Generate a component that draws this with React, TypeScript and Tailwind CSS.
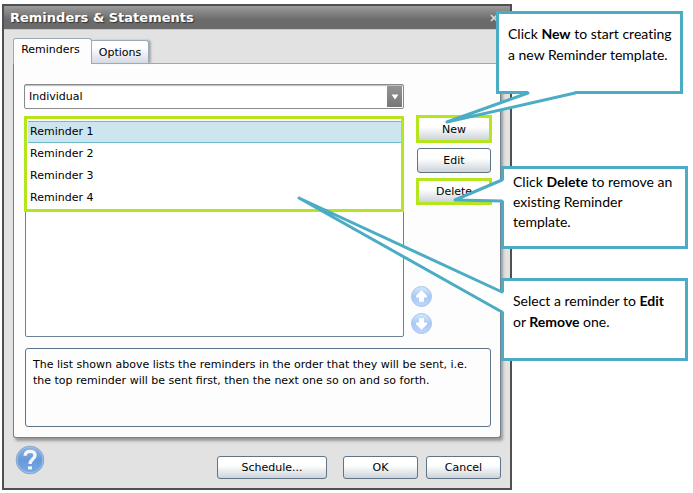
import type { ReactNode } from 'react';

const reminders = ['Reminder 1', 'Reminder 2', 'Reminder 3', 'Reminder 4'];

const buttonClass =
  'rounded-[3px] border border-[#5f7486] bg-linear-to-b from-white from-40% to-[#cdd3d9] pt-0.5 text-center text-black';

function ArrowButton({ label, down }: { label: string; down?: boolean }) {
  return (
    <button type="button" aria-label={label} className="block size-[21px]">
      <svg viewBox="0 0 21 21" className="size-full">
        <defs>
          <linearGradient id={down ? 'arrowDown' : 'arrowUp'} x1="0" y1="0" x2="0" y2="1">
            <stop offset="0" stopColor="#d3ecfb" />
            <stop offset="0.5" stopColor="#aac8f5" />
            <stop offset="1" stopColor="#bcd8fb" />
          </linearGradient>
        </defs>
        <circle cx="10.5" cy="10.5" r="10" fill={down ? 'url(#arrowDown)' : 'url(#arrowUp)'} stroke="#a9c2ea" />
        <path
          d="M10.5 4.2 L16 9.8 V11.5 H13 V15.8 H8 V11.5 H5 V9.8 Z"
          fill="#fff"
          transform={down ? 'rotate(180 10.5 10.5)' : undefined}
        />
      </svg>
    </button>
  );
}

function HelpIcon() {
  return (
    <svg viewBox="0 0 30 30" className="size-full">
      <defs>
        <linearGradient id="help" x1="0" y1="0" x2="0" y2="1">
          <stop offset="0" stopColor="#8db3e4" />
          <stop offset="0.5" stopColor="#6699d9" />
          <stop offset="1" stopColor="#79abe6" />
        </linearGradient>
      </defs>
      <circle cx="15" cy="15" r="13.8" fill="url(#help)" stroke="#8aa5c8" />
      <circle cx="15" cy="15" r="12.8" fill="none" stroke="#a5c6ef" strokeWidth="0.8" />
      <path
        d="M10.2 10.8 C10.2 7.4 12.4 6.4 15.2 6.4 C18.2 6.4 20 8 20 10.4 C20 14 15 14.2 15 19"
        fill="none"
        stroke="#f4f6f8"
        strokeWidth="3.4"
      />
      <rect x="13" y="21.4" width="4" height="3" fill="#f4f6f8" />
    </svg>
  );
}

function Callout({ className, children, tail }: { className: string; children: ReactNode; tail: ReactNode }) {
  return (
    <aside
      className={`absolute left-full border-[3px] border-[#4bacc6] bg-white font-[Lato,sans-serif] text-[14px] text-black [font-variant-ligatures:none] ${className}`}
    >
      {tail}
      <p className="relative">{children}</p>
    </aside>
  );
}

export default function App() {
  return (
    <main className="bg-white pt-1 pr-[181px] pb-1 pl-[2px] font-['DejaVu_Sans',Verdana,sans-serif] text-[11px] text-black">
      <div className="relative">
        {/* Dialog */}
        <section className="border-2 border-[#505050] bg-[#e2e2e2]">
          <header className="flex h-6 items-center justify-between border-b border-[#c8c8c8] bg-linear-to-b from-[#9c9c9c] to-[#6b6b6b] to-60% pr-3 pl-1.5">
            <h1 className="text-[13px] font-bold text-white [text-shadow:1px_1px_1px_#333]">
              Reminders &amp; Statements
            </h1>
            <button type="button" aria-label="Close" className="block size-2">
              <svg viewBox="0 0 8 8" className="size-full" stroke="#ddd" strokeWidth="1.6">
                <path d="M1 1 L7 7 M7 1 L1 7" />
              </svg>
            </button>
          </header>

          <div className="px-[9px] pt-2 pb-[9px]">
            {/* Tabs */}
            <div role="tablist" className="flex h-[25px] items-end">
              <button
                type="button"
                role="tab"
                aria-selected="true"
                className="relative -mb-px h-[26px] w-[79px] rounded-t-[3px] border border-b-0 border-[#9aabb8] bg-[#fdfdfd] pr-1 pb-0.5"
              >
                Reminders
              </button>
              <button
                type="button"
                role="tab"
                aria-selected="false"
                className="h-[23px] w-[57px] rounded-tr-[3px] border border-b-0 border-l-0 border-[#9aabb8] bg-linear-to-b from-white from-30% to-[#d5d9e2] pt-0.5 shadow-[2px_0_2px_#aaa]"
              >
                Options
              </button>
            </div>

            {/* Tab panel */}
            <div
              role="tabpanel"
              className="rounded-b-[3px] border border-t-[#9aabb8] border-[#6f8291] bg-[#fdfdfd] pt-5 pr-[9px] pb-2.5 pl-[11px] shadow-[2px_3px_3px_#999]"
            >
              <div className="-mr-px flex gap-3">
                <div className="flex-1">
                  <div className="relative -ml-px">
                    <select
                      aria-label="Reminder type"
                      className="block h-[25px] w-full appearance-none rounded-[2px] border border-[#8a8a8a] bg-white pt-0.5 pl-1 text-[11px] shadow-[inset_0_1px_1px_#bbb]"
                    >
                      <option>Individual</option>
                    </select>
                    <span className="pointer-events-none absolute inset-y-[2px] right-[2px] flex w-[15px] items-center justify-center bg-linear-to-b from-[#949494] to-[#777]">
                      <svg viewBox="0 0 8 6" className="w-2">
                        <path d="M0.5 0.5 H7.5 L4 5.5 Z" fill="#fff" />
                      </svg>
                    </span>
                  </div>

                  <div className="relative mt-2 min-h-[220px] rounded-b-[2px] border border-[#6f8291] bg-white px-[2px] pt-[3px]">
                    <ul aria-label="Reminders">
                      {reminders.map((name, i) => (
                        <li key={name}>
                          <button
                            type="button"
                            className={
                              i === 0
                                ? 'block h-[22px] w-full border-y border-[#6fbccb] bg-[#cde5ef] pl-[2px] text-left'
                                : 'block h-[22px] w-full pl-[2px] text-left'
                            }
                          >
                            {name}
                          </button>
                        </li>
                      ))}
                    </ul>
                    <span className="pointer-events-none absolute -top-[2px] -right-px -left-[2px] h-24 border-[3px] border-[#b5e61d]" />
                  </div>
                </div>

                {/* List actions */}
                <div className="flex w-[76px] flex-col pt-[31px]">
                  <div className="border-[3px] border-[#b5e61d]">
                    <button
                      type="button"
                      className="block h-[22px] w-full bg-linear-to-b from-white from-40% to-[#cdd3d9] pt-0.5"
                    >
                      New
                    </button>
                  </div>
                  <button type="button" className={`mx-px my-[5px] h-[25px] ${buttonClass}`}>
                    Edit
                  </button>
                  <div className="border-[3px] border-[#b5e61d]">
                    <button
                      type="button"
                      className="block h-[21px] w-full bg-linear-to-b from-white from-40% to-[#cdd3d9] pt-0.5"
                    >
                      Delete
                    </button>
                  </div>
                  <div className="mt-[81px] -ml-[5px] flex flex-col gap-1.5">
                    <ArrowButton label="Move up" />
                    <ArrowButton label="Move down" down />
                  </div>
                </div>
              </div>

              <p className="mt-[11px] min-h-[79px] rounded-[3px] border border-[#5f7486] px-[7px] py-2 leading-4">
                The list shown above lists the reminders in the order that they will be sent, i.e. the top reminder
                will be sent first, then the next one so on and so forth.
              </p>
            </div>

            {/* Footer */}
            <footer className="flex items-end pt-[7px]">
              <button type="button" aria-label="Help" className="mb-1 ml-[2px] block size-[30px]">
                <HelpIcon />
              </button>
              <div className="ml-auto flex">
                <button type="button" className={`mr-4 h-[23px] w-[110px] ${buttonClass}`}>
                  Schedule...
                </button>
                <button type="button" className={`mr-2 h-[23px] w-[75px] ${buttonClass}`}>
                  OK
                </button>
                <button type="button" className={`h-[23px] w-[75px] ${buttonClass}`}>
                  Cancel
                </button>
              </div>
            </footer>
          </div>
        </section>

        {/* Callouts, pinned to the right edge of the dialog */}
        <Callout
          className="top-[7px] -ml-4 h-[83px] w-[187px] py-[9px] pl-[9px] leading-[21px]"
          tail={
            <svg width="132" height="34" className="absolute top-[76px] -left-[54px] overflow-visible">
              <path d="M83 0 V3 L2 32 L130 3 V0 Z" fill="#fff" />
              <path
                d="M83 3 L2 32 L130 3"
                fill="none"
                stroke="#4bacc6"
                strokeWidth="3"
                strokeLinecap="round"
                strokeLinejoin="round"
              />
            </svg>
          }
        >
          Click <b>New</b> to start creating
          <br />a new Reminder template.
        </Callout>
        <Callout
          className="top-[162px] -ml-[11px] h-[83px] w-[187px] py-[3px] pl-[9px] leading-5"
          tail={
            <svg width="54" height="26" className="absolute top-[9px] -left-[52px] overflow-visible">
              <path d="M54 2 H50 L3 22 L50 23 H54 Z" fill="#fff" />
              <path
                d="M50 2 L3 22 L50 23"
                fill="none"
                stroke="#4bacc6"
                strokeWidth="3"
                strokeLinecap="round"
                strokeLinejoin="round"
              />
            </svg>
          }
        >
          Click <b>Delete</b> to remove an
          <br />
          existing Reminder
          <br />
          template.
        </Callout>
        <Callout
          className="top-[274px] -ml-[11px] h-[83px] w-[187px] py-[9px] pl-[9px] leading-[21px]"
          tail={
            <svg width="208" height="120" className="absolute -top-[85px] -left-[208px] overflow-visible">
              <path d="M210 96 H206 L3 2 L206 116 H210 Z" fill="#fff" />
              <path
                d="M206 96 L3 2 L206 116"
                fill="none"
                stroke="#4bacc6"
                strokeWidth="3"
                strokeLinecap="round"
                strokeLinejoin="round"
              />
            </svg>
          }
        >
          Select a reminder to <b>Edit</b>
          <br />
          or <b>Remove</b> one.
        </Callout>
      </div>
    </main>
  );
}
